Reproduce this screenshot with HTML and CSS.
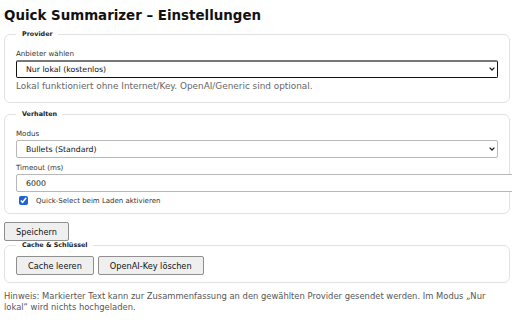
FILE: index.html
```html
<!DOCTYPE html>
<html lang="de">
<head>
<meta charset="utf-8">
<title>Quick Summarizer – Einstellungen</title>
<link rel="stylesheet" href="styles.css">
</head>
<body>
<h1 class="title">Quick Summarizer – Einstellungen</h1>

<fieldset class="group">
  <legend class="legend">Provider</legend>
  <label class="label" for="provider">Anbieter wählen</label>
  <div class="select-wrap">
    <select id="provider" class="select select-focus">
      <option>Nur lokal (kostenlos)</option>
    </select>
    <svg class="chev" viewBox="0 0 6 4" width="6" height="4"><path d="M0.6 0.6 L3 3 L5.4 0.6" fill="none" stroke="#222" stroke-width="1.3"/></svg>
  </div>
  <p class="help">Lokal funktioniert ohne Internet/Key. OpenAI/Generic sind optional.</p>
</fieldset>

<fieldset class="group group-gap">
  <legend class="legend">Verhalten</legend>
  <label class="label" for="mode">Modus</label>
  <div class="select-wrap">
    <select id="mode" class="select">
      <option>Bullets (Standard)</option>
    </select>
    <svg class="chev" viewBox="0 0 6 4" width="6" height="4"><path d="M0.6 0.6 L3 3 L5.4 0.6" fill="none" stroke="#222" stroke-width="1.3"/></svg>
  </div>
  <label class="label label-gap" for="timeout">Timeout (ms)</label>
  <input id="timeout" class="input" type="text" value="6000">
  <label class="check-row"><input type="checkbox" class="check" checked><span>Quick-Select beim Laden aktivieren</span></label>
</fieldset>

<button class="btn btn-save">Speichern</button>

<fieldset class="group group-cache">
  <legend class="legend">Cache &amp; Schlüssel</legend>
  <div class="btn-row">
    <button class="btn">Cache leeren</button>
    <button class="btn">OpenAI-Key löschen</button>
  </div>
</fieldset>

<p class="hint">Hinweis: Markierter Text kann zur Zusammenfassung an den gewählten Provider gesendet werden. Im Modus „Nur lokal“ wird nichts hochgeladen.</p>
</body>
</html>
```

FILE: styles.css
```css
html, body {
  margin: 0;
  background: #ffffff;
  overflow-x: hidden;
}
body {
  padding: 0 2px 4px 4px;
  font-family: "DejaVu Sans", Verdana, sans-serif;
  color: #222;
}
.title {
  margin: 8px 0 6px;
  font-size: 13.4px;
  line-height: 16px;
  font-weight: bold;
  color: #111;
}
.group {
  margin: 0;
  padding: 11px 11px 11px;
  border: 1px solid #e2e2e2;
  border-radius: 6px;
  min-width: 0;
}
.group-gap {
  margin-top: 7px;
  padding-bottom: 7px;
}
.group-cache {
  padding-top: 7px;
  padding-bottom: 7px;
}
.legend {
  padding: 0 5px 0 6px;
  font-size: 6.4px;
  line-height: 8px;
  font-weight: bold;
  color: #222;
}
.label {
  display: block;
  font-size: 7.1px;
  line-height: 10px;
  margin-bottom: 1px;
  color: #333;
}
.label-gap {
  margin-top: 5px;
}
.select-wrap {
  position: relative;
}
.select {
  display: block;
  width: 100%;
  height: 18px;
  box-sizing: border-box;
  margin: 0;
  padding: 0 9px;
  -webkit-appearance: none;
  appearance: none;
  background: #fff;
  border: 1px solid #b8b8b8;
  border-radius: 2px;
  font-family: "DejaVu Sans", Verdana, sans-serif;
  font-size: 7.8px;
  color: #111;
}
.select-focus {
  border-color: #111;
  border-top-color: #777;
  border-top-width: 2px;
}
.chev {
  position: absolute;
  right: 3px;
  top: 7px;
}
.help {
  margin: 3px 0 0;
  font-size: 8.9px;
  line-height: 10px;
  color: #666;
}
.input {
  display: block;
  width: 100%;
  height: 16px;
  margin: 0;
  padding: 0 9px;
  border: 1px solid #b8b8b8;
  border-radius: 2px;
  background: #fff;
  font-family: "DejaVu Sans", Verdana, sans-serif;
  font-size: 7.8px;
  color: #111;
  position: relative;
}
.check-row {
  display: flex;
  align-items: center;
  height: 11px;
  margin-top: 3px;
  font-size: 7px;
  color: #333;
}
.check {
  width: 9px;
  height: 9px;
  margin: 0 8px 0 3px;
  accent-color: #1d63d4;
}
.btn {
  height: 19px;
  margin: 0;
  padding: 0 11px;
  background: #efefef;
  border: 1px solid #8f8f8f;
  border-radius: 2px;
  font-family: "DejaVu Sans", Verdana, sans-serif;
  font-size: 8.2px;
  color: #111;
}
.btn-save {
  display: block;
  margin-top: 8px;
}
.btn-row {
  display: flex;
  gap: 4px;
}
.hint {
  margin: 8px 0 0;
  font-size: 8.4px;
  line-height: 11px;
  color: #555;
}
```
